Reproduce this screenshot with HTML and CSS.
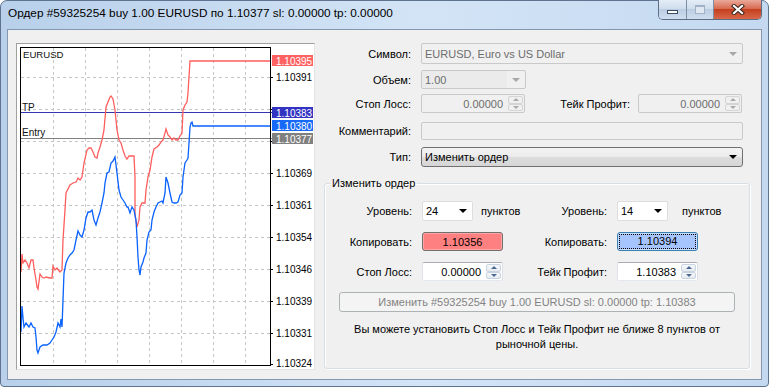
FILE: index.html
```html
<!DOCTYPE html>
<html lang="ru">
  <head>
    <meta charset="UTF-8" />
    <title>Ордер #59325254</title>
    <link rel="stylesheet" href="styles.css">
  </head>
  <body>
    <div class="window">
      <div class="titlebar">
        <span class="title">Ордер #59325254 buy 1.00 EURUSD по 1.10377 sl: 0.00000 tp: 0.00000</span>
        <div class="caption-buttons">
          <span class="cbtn min"><i></i></span>
          <span class="cbtn max"><i></i></span>
          <span class="cbtn close">
            <svg width="14" height="11" viewBox="0 0 14 11">
              <path d="M3 2 L11 9 M11 2 L3 9" stroke="#3a2420" stroke-width="4.2" stroke-linecap="square" />
              <path d="M3 2 L11 9 M11 2 L3 9" stroke="#fff" stroke-width="2.2" stroke-linecap="square" />
            </svg>
          </span>
        </div>
      </div>

      <div class="client">
        <div class="chart">
          <svg width="297" height="325" viewBox="17 44 297 325" font-family="Liberation Sans, Arial, sans-serif" font-size="10">
            <g stroke="#c6c6c6" stroke-dasharray="3 3" shape-rendering="crispEdges">
              <path d="M53.5 48V365 M85.5 48V365 M117.5 48V365 M149.5 48V365 M181.5 48V365 M213.5 48V365 M245.5 48V365" />
              <path d="M21 77.5H270 M21 109.5H270 M21 141.5H270 M21 173.5H270 M21 205.5H270 M21 237.5H270 M21 269.5H270 M21 301.5H270 M21 333.5H270" />
            </g>
            <g shape-rendering="crispEdges">
              <path d="M21 112.5H272" stroke="#3535b4" />
              <path d="M21 138.5H272" stroke="#808080" />
            </g>
            <polyline fill="none" stroke="#ff5e5e" stroke-width="1.3" points="21,272 22,254 23,263 25,260 27,263 29,268 31,260 33,260 34,268 36,280 37,287 38,289 40,274 42,277 44,278 46,277 50,278 52,278 53,266 55,270 57,268 60,272 62,270 63,240 65,210 66,193 70,185 73,183 76,182 78,178 80,180 82,177 84,163 87,150 89,148 91,148 93,152 95,157 97,158 98,153 100,147 102,140 104,130 106,107 108,102 110,97 111,96 113,99 115,110 117,130 119,140 121,143 123,150 125,156 127,159 129,156 134,156 135,177 135,215 137,227 139,220 140,207 142,203 145,203 146,190 148,177 150,170 152,157 154,149 157,147 159,145 161,142 163,140 165,133 166,129 168,135 170,137 172,140 174,138 176,140 178,140 180,136 182,133 183,110 185,105 187,102 188,93 189,77 190,61 270,61" />
            <polyline fill="none" stroke="#0a62ff" stroke-width="1.3" points="21,332 22,306 23,318 24,327 26,323 29,327 31,323 33,327 35,328 36,337 37,350 38,353 40,347 43,345 47,345 50,343 52,340 54,337 56,332 58,323 60,327 61,319 62,327 63,300 64,273 66,263 68,258 70,255 72,253 74,250 76,240 78,231 80,235 82,237 84,230 86,218 88,212 90,212 92,210 94,220 96,225 98,218 100,212 102,203 104,193 105,183 107,173 109,172 111,163 113,161 115,157 117,173 119,190 121,197 123,200 125,203 127,207 128,207 130,213 132,207 134,210 136,220 137,237 138,257 139,270 140,275 141,267 143,262 144,258 146,253 147,240 149,232 151,230 152,220 154,212 156,207 158,203 160,202 162,201 163,203 165,193 166,177 168,183 170,193 172,202 174,203 176,203 178,202 180,195 182,193 183,177 185,163 187,160 188,158 189,143 190,127 191,123 192,122 193,126 270,126" />
            <rect x="20.5" y="47.5" width="250" height="318" fill="none" stroke="#000" shape-rendering="crispEdges" />
            <g fill="#111">
              <text x="23" y="58" font-size="9.6">EURUSD</text>
              <text x="22" y="111">TP</text>
              <text x="22" y="136">Entry</text>
            </g>
            <path d="M270 77.5h3 M270 109.5h3 M270 141.5h3 M270 173.5h3 M270 205.5h3 M270 237.5h3 M270 269.5h3 M270 301.5h3 M270 333.5h3 M270 364.5h3" stroke="#000" shape-rendering="crispEdges" />
            <g fill="#000">
              <text x="276" y="81">1.10391</text>
              <text x="276" y="177">1.10369</text>
              <text x="276" y="209">1.10361</text>
              <text x="276" y="241">1.10354</text>
              <text x="276" y="273">1.10346</text>
              <text x="276" y="305">1.10339</text>
              <text x="276" y="337">1.10331</text>
              <text x="276" y="367">1.10324</text>
            </g>
            <rect x="272" y="55" width="41" height="11" fill="#ff6262" />
            <rect x="272" y="107" width="41" height="11" fill="#3333c2" />
            <rect x="272" y="120" width="41" height="11" fill="#1769f7" />
            <rect x="272" y="133" width="41" height="11" fill="#808080" />
            <g fill="#fff">
              <text x="276" y="64.5">1.10395</text>
              <text x="276" y="116.5">1.10383</text>
              <text x="276" y="129.5">1.10380</text>
              <text x="276" y="142.5">1.10377</text>
            </g>
          </svg>
        </div>

        <div class="form">
          <div class="row r1">
            <span class="lbl">Символ:</span>
            <div class="combo off symbol">EURUSD, Euro vs US Dollar<span class="arrow gray"></span></div>
          </div>
          <div class="row r2">
            <span class="lbl">Объем:</span>
            <div class="combo off volume"><span class="edit">1.00</span><span class="arrow gray"></span></div>
          </div>
          <div class="row r3">
            <span class="lbl">Стоп Лосс:</span>
            <div class="spin off"><span class="val">0.00000</span><span class="spinbtns"><i class="up"></i><i class="down"></i></span></div>
            <span class="lbl lbl2">Тейк Профит:</span>
            <div class="spin off"><span class="val">0.00000</span><span class="spinbtns"><i class="up"></i><i class="down"></i></span></div>
          </div>
          <div class="row r4">
            <span class="lbl">Комментарий:</span>
            <div class="edit-box off"></div>
          </div>
          <div class="row r5">
            <span class="lbl">Тип:</span>
            <div class="combo type">Изменить ордер<span class="arrow"></span></div>
          </div>

          <fieldset class="group">
            <legend>Изменить ордер</legend>
            <div class="group-grid">
              <span class="lbl">Уровень:</span>
              <div class="cell"><div class="combo level">24<span class="arrow"></span></div><span class="units">пунктов</span></div>
              <span class="lbl">Уровень:</span>
              <div class="cell"><div class="combo level">14<span class="arrow"></span></div><span class="units wide">пунктов</span></div>

              <span class="lbl">Копировать:</span>
              <div class="cell"><button class="copy red">1.10356</button></div>
              <span class="lbl">Копировать:</span>
              <div class="cell"><button class="copy blue"><span>1.10394</span></button></div>

              <span class="lbl">Стоп Лосс:</span>
              <div class="cell"><div class="spin on"><span class="val">0.00000</span><span class="spinbtns"><i class="up"></i><i class="down"></i></span></div></div>
              <span class="lbl">Тейк Профит:</span>
              <div class="cell"><div class="spin on"><span class="val">1.10383</span><span class="spinbtns"><i class="up"></i><i class="down"></i></span></div></div>
            </div>
            <button class="modify" disabled>Изменить #59325254 buy 1.00 EURUSD sl: 0.00000 tp: 1.10383</button>
            <p class="note">Вы можете установить Стоп Лосс и Тейк Профит не ближе 8 пунктов от<br>рыночной цены.</p>
          </fieldset>
        </div>
      </div>
    </div>
  </body>
</html>
```

FILE: styles.css
```css
body {
  margin: 0;
  background: #fff;
  font-family: "Liberation Sans", Arial, sans-serif;
  font-size: 11px;
  color: #000;
}

.window {
  width: 769px;
  height: 387px;
  box-sizing: border-box;
  border: 1px solid #5d7390;
  border-radius: 7px 7px 4px 4px;
  background: linear-gradient(to right, #b8d0ea, #d3e4f6 55%, #c4d9f0);
  padding: 0 6px 6px 6px;
  display: flex;
  flex-direction: column;
}

.titlebar {
  height: 28px;
  display: flex;
  justify-content: space-between;
  align-items: flex-start;
}

.title {
  font-size: 11.8px;
  line-height: 15px;
  margin: 5px 0 0 1px;
  color: #000;
}

.caption-buttons {
  display: flex;
  margin-top: -1px;
  border: 1px solid #5b6e86;
  border-top: none;
  border-radius: 0 0 5px 5px;
  overflow: hidden;
  height: 19px;
}

.cbtn {
  display: flex;
  align-items: center;
  justify-content: center;
  height: 19px;
  background: linear-gradient(#e4edf7, #d0ddec 45%, #bccde3 50%, #cfdeef);
}

.cbtn.min {
  width: 27px;
  border-right: 1px solid #7d8ea5;
}

.cbtn.min i {
  width: 9px;
  height: 2px;
  margin-top: 5px;
  background: #fff;
  border: 1px solid #3a4a60;
}

.cbtn.max {
  width: 26px;
  border-right: 1px solid #7d8ea5;
}

.cbtn.max i {
  width: 8px;
  height: 6px;
  border: 1px solid #9fb2c9;
  border-top-width: 2px;
  background: #dfe8f2;
}

.cbtn.close {
  width: 47px;
  background: linear-gradient(#e9a99a, #d86b52 45%, #c4401f 50%, #d8684a);
}

.client {
  flex: 1;
  display: flex;
  align-items: flex-start;
  background: #f0f0f0;
  border: 1px solid #8497ae;
  padding: 13px 0 0 8px;
}

.chart {
  width: 299px;
  height: 327px;
  box-sizing: border-box;
  border: 1px solid;
  border-color: #a0a0a0 #e4e4e4 #e4e4e4 #a0a0a0;
  background: #fff;
}

.chart svg {
  display: block;
}

.form {
  width: 426px;
  margin-left: 9px;
  display: flex;
  flex-direction: column;
}

.row {
  display: flex;
  align-items: center;
}

.lbl {
  width: 87px;
  margin-right: 10px;
  text-align: right;
  white-space: nowrap;
}

.lbl2 {
  width: 105px;
  margin-right: 8px;
}

.r1 { height: 21px; }
.r2 { height: 19px; margin-top: 6px; }
.r3 { height: 19px; margin-top: 5px; }
.r4 { height: 18px; margin-top: 9px; }
.r5 { height: 20px; margin-top: 7px; }

.combo {
  display: flex;
  align-items: center;
  box-sizing: border-box;
  height: 100%;
  border: 1px solid #c8c8c8;
  border-radius: 2px;
  padding-left: 3px;
  background: #fff;
  white-space: nowrap;
}

.arrow {
  margin-left: auto;
  margin-right: 5px;
  width: 0;
  height: 0;
  border-left: 4px solid transparent;
  border-right: 4px solid transparent;
  border-top: 4px solid #000;
}

.arrow.gray {
  border-top-color: #a8a8a8;
}

.combo.off {
  background: #f0f0f0;
  color: #6d6d6d;
  border-color: #c9c9c9;
}

.symbol {
  width: 322px;
}

.volume {
  width: 105px;
  padding-left: 0;
}

.volume .edit {
  align-self: stretch;
  display: flex;
  align-items: center;
  width: 82px;
  padding-left: 3px;
  background: #ebebeb;
}

.type {
  width: 322px;
  border-color: #707070;
  border-radius: 3px;
  background: linear-gradient(#f4f4f4, #ebebeb 50%, #dddddd 51%, #d6d6d6);
}

.spin {
  display: flex;
  box-sizing: border-box;
  height: 100%;
  border: 1px solid #c9c9c9;
  border-radius: 2px;
}

.spin .val {
  flex: 1;
  display: flex;
  align-items: center;
  justify-content: flex-end;
  padding-right: 5px;
}

.spin.off {
  width: 104px;
  background: #f0f0f0;
  color: #6d6d6d;
}

.spin.on {
  width: 81px;
  background: #fff;
  border-color: #abadb3 #dbdfe6 #e3e9ef #e2e3ea;
}

.spinbtns {
  display: flex;
  flex-direction: column;
  width: 15px;
  margin: 1px 1px 1px 0;
}

.spinbtns i {
  flex: 1;
  display: flex;
  align-items: center;
  justify-content: center;
  border: 1px solid #d4d4d4;
  border-radius: 2px;
}

.spinbtns i::before {
  content: "";
  border-left: 3px solid transparent;
  border-right: 3px solid transparent;
}

.spinbtns .up::before {
  border-bottom: 3px solid #a9a9a9;
}

.spinbtns .down::before {
  border-top: 3px solid #a9a9a9;
}

.spin.on .spinbtns i {
  border-color: #c9d3df;
  background: linear-gradient(#f6f8fb, #e6ebf1);
}

.spin.on .spinbtns .up::before {
  border-bottom-color: #4c6a8f;
}

.spin.on .spinbtns .down::before {
  border-top-color: #4c6a8f;
}

.edit-box {
  width: 322px;
  height: 100%;
  box-sizing: border-box;
  border: 1px solid #c9c9c9;
  border-radius: 2px;
  background: #f0f0f0;
}

.group {
  margin: 9px 0 0 0;
  padding: 0 0 0 0;
  height: 193px;
  box-sizing: border-box;
  border: 1px solid #d5dfe5;
  border-radius: 3px;
  box-shadow: inset 1px 1px 0 #fff, 1px 1px 0 #fff;
}

.group legend {
  padding: 0 2px;
  margin-left: 5px;
  line-height: 14px;
}

.group-grid {
  margin-top: 11px;
  display: grid;
  grid-template-columns: 87px 100px 75px 120px;
  grid-template-rows: 20px 19px 19px;
  column-gap: 10px;
  row-gap: 11px;
  align-items: center;
}

.group-grid .lbl {
  width: auto;
  margin: 0;
}

.cell {
  display: flex;
  align-items: center;
  height: 100%;
}

.combo.level {
  width: 51px;
  border-color: #dedede;
}

.units {
  margin-left: 8px;
}

.units.wide {
  margin-left: 14px;
}

.copy {
  width: 81px;
  height: 19px;
  padding: 0;
  font: inherit;
  color: #000;
  border-radius: 3px;
}

.copy.red {
  background: #ff8080;
  border: 1px solid #707070;
  box-shadow: inset 0 0 0 1px #ffa3a3;
}

.copy.blue {
  background: #a6c4fd;
  border: 1px solid #3c7fb1;
  box-shadow: inset 0 0 0 1px #c5ddff;
}

.copy.blue span {
  display: block;
  margin: 2px;
  line-height: 13px;
  outline: 1px dotted #000;
}

.modify {
  display: block;
  margin: 11px 0 0 14px;
  width: 396px;
  height: 20px;
  padding: 0;
  font: inherit;
  color: #838383;
  background: #f4f4f4;
  border: 1px solid #adb2b5;
  border-radius: 3px;
}

.note {
  margin: 10px 0 0 0;
  text-align: center;
  line-height: 15px;
  white-space: nowrap;
}
```
